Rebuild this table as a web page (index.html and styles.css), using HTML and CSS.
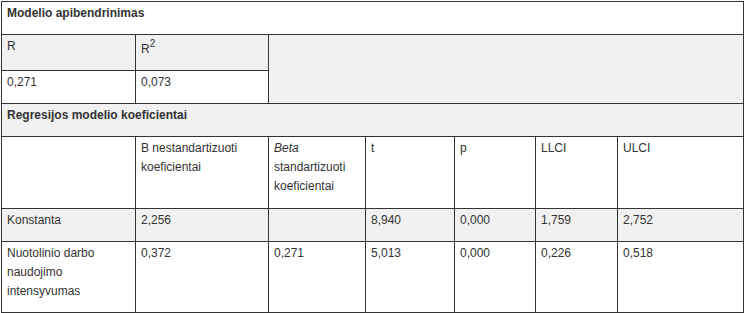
FILE: index.html
```html
<!DOCTYPE html>
<html lang="lt">
<head>
<meta charset="utf-8">
<title>Modelio apibendrinimas</title>
<link rel="stylesheet" href="styles.css">
</head>
<body>
<div class="wrap">
<table class="stats">
  <colgroup>
    <col class="c1"><col class="c2"><col class="c3"><col class="c4"><col class="c5"><col class="c6"><col class="c7">
  </colgroup>
  <tbody>
    <tr><td colspan="7" class="head">Modelio apibendrinimas</td></tr>
    <tr class="alt"><td>R</td><td>R<sup>2</sup></td><td colspan="5" rowspan="2" class="alt-cell"></td></tr>
    <tr><td>0,271</td><td>0,073</td></tr>
    <tr class="alt"><td colspan="7" class="head">Regresijos modelio koeficientai</td></tr>
    <tr class="tall"><td></td><td>B nestandartizuoti koeficientai</td><td><em>Beta</em> standartizuoti koeficientai</td><td>t</td><td>p</td><td>LLCI</td><td>ULCI</td></tr>
    <tr class="alt"><td>Konstanta</td><td>2,256</td><td></td><td>8,940</td><td>0,000</td><td>1,759</td><td>2,752</td></tr>
    <tr><td>Nuotolinio darbo naudojimo intensyvumas</td><td>0,372</td><td>0,271</td><td>5,013</td><td>0,000</td><td>0,226</td><td>0,518</td></tr>
  </tbody>
</table>
</div>
</body>
</html>
```
FILE: styles.css
```css
html, body {
  margin: 0;
  padding: 0;
  background: #ffffff;
}
.wrap {
  padding: 1px 0 0 1px;
}
.stats {
  border-collapse: collapse;
  table-layout: fixed;
  width: 743px;
  font-family: "Liberation Sans", Arial, sans-serif;
  font-size: 12px;
  line-height: 19px;
  color: #333333;
}
.c1 { width: 134px; }
.c2 { width: 133px; }
.c3 { width: 97px; }
.c4 { width: 89px; }
.c5 { width: 81px; }
.c6 { width: 82px; }
.c7 { width: 126px; }
.stats td {
  border: 1px solid #333333;
  padding: 2px 5px 11px 5px;
  vertical-align: top;
  text-align: left;
}
.stats tr.tall td {
  padding-bottom: 12px;
}
.stats tr.alt td {
  background: #f1f1f1;
}
.stats td.alt-cell {
  background: #f1f1f1;
}
.stats td.head {
  font-weight: bold;
}
.stats sup {
  font-size: 10px;
  line-height: 14px;
  vertical-align: 6px;
}
```
